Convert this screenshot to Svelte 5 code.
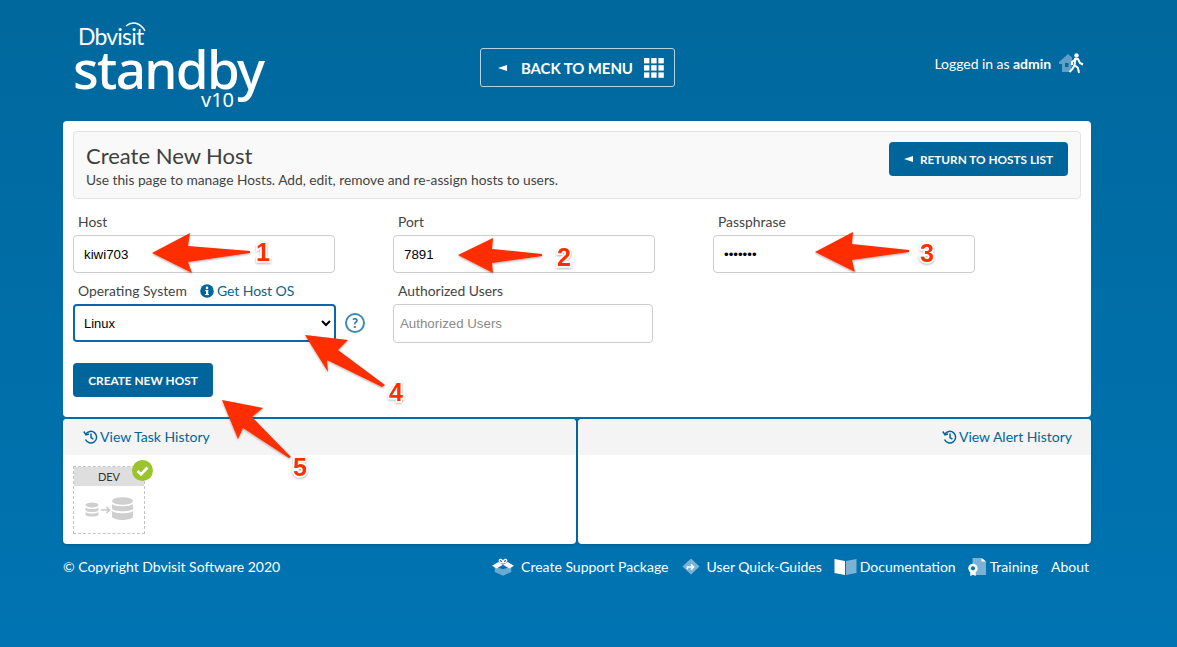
<script>
	const fields = [
		{ label: 'Host', value: 'kiwi703', type: 'text' },
		{ label: 'Port', value: '7891', type: 'text' },
		{ label: 'Passphrase', value: 'secret1', type: 'password' }
	];

	// red callouts drawn over the form
	const arrows = [
		{ n: 1, tx: 263, ty: 261, points: '152,253 190,233 188,246 250,251 250,253 188,262 192,273' },
		{ n: 2, tx: 564, ty: 266, points: '458,255 493,238 492,249 542,254 542,256 492,263 493,273' },
		{ n: 3, tx: 927, ty: 262, points: '815,252 853,232 852,244 909,250 909,252 852,260 855,272' },
		{ n: 4, tx: 396, ty: 401, points: '305,335 348,340 338,350 385,385 382,387 327,360 328,372' },
		{ n: 5, tx: 300, ty: 476, points: '222,400 263,408 252,417 291,457 289,458 243,428 238,439' }
	];
</script>

<div class="page">
	<header class="top">
		<div class="logo">
			<div class="logo-brand">Dbvisit</div>
			<div class="logo-name">standby</div>
			<div class="logo-version">v10</div>
			<svg class="logo-arc" width="24" height="14" viewBox="0 0 24 14">
				<path d="M2 5C8 0 16 1 21 10" fill="none" stroke="#fff" stroke-width="1.500" />
			</svg>
		</div>
		<button class="menu-btn">
			<span class="tri"></span>
			<span>BACK TO MENU</span>
			<svg width="20" height="20" viewBox="0 0 20 20" fill="#fff">
				{#each [0, 7.2, 14.4] as y}
					{#each [0, 7.2, 14.4] as x}
						<rect {x} {y} width="5.4" height="5.4" />
					{/each}
				{/each}
			</svg>
		</button>
		<div class="login">
			<span>Logged in as <b>admin</b></span>
			<svg width="26" height="22" viewBox="0 0 26 22">
				<path d="M1 10 10 2l4 3.4V12l-1 8H4v-8H1z" fill="#5f9fc6" />
				<rect x="7" y="11" width="3.5" height="4" fill="#006a9f" />
				<circle cx="18.5" cy="3.5" r="2.2" fill="#fff" />
				<path d="M16 7h4l2 4 3 1.5M17.5 7l-1 6 3.5 3 1 5M16.500 13l-2 4-3 3M16.500 8l-2.500 2v3" fill="none" stroke="#fff" stroke-width="2" />
			</svg>
		</div>
	</header>

	<main class="card">
		<div class="title-box">
			<div>
				<h1>Create New Host</h1>
				<p>Use this page to manage Hosts. Add, edit, remove and re-assign hosts to users.</p>
			</div>
			<button class="btn return"><span class="tri small"></span>RETURN TO HOSTS LIST</button>
		</div>

		<div class="form-grid">
			{#each fields as f}
				<div class="field">
					<label for={f.label}>{f.label}</label>
					<input id={f.label} type={f.type} value={f.value} />
				</div>
			{/each}

			<div class="field">
				<div class="os-label">
					<label for="os">Operating System</label>
					<span class="link get-os">
						<svg width="14" height="14" viewBox="0 0 14 14">
							<circle cx="7" cy="7" r="6.800" fill="#00659b" />
							<rect x="6" y="6" width="2.200" height="5" fill="#fff" />
							<rect x="5.200" y="6" width="3" height="1.100" fill="#fff" />
							<rect x="5.200" y="10" width="3.800" height="1.100" fill="#fff" />
							<circle cx="7" cy="3.900" r="1.300" fill="#fff" />
						</svg>
						Get Host OS
					</span>
				</div>
				<div class="os-row">
					<select id="os" class="os-select">
						<option>Linux</option>
					</select>
					<span class="help">?</span>
				</div>
			</div>
			<div class="field">
				<label for="users">Authorized Users</label>
				<input id="users" class="users" placeholder="Authorized Users" />
			</div>
		</div>

		<button class="btn create">CREATE NEW HOST</button>
	</main>

	<section class="panels">
		<div class="panel">
			<div class="panel-head">
				<span class="link">
					<svg class="hist" width="15" height="14" viewBox="0 0 15 14" fill="none" stroke="#00659b" stroke-width="1.500">
						<path d="M2.800 4.200A5.800 5.800 0 1 1 2.500 9.500" />
						<path d="M.8 1.500 3 4.800l3-.8" />
						<path d="M8 3.600V7.500l2.400 1.600" />
					</svg>
					View Task History
				</span>
			</div>
			<div class="tile">
				<div class="tile-head">DEV</div>
				<div class="tile-body">
					<svg width="50" height="26" viewBox="0 0 50 26">
						<g fill="#cfcfcf">
							<ellipse cx="7" cy="8" rx="6.500" ry="2.600" />
							<path d="M.5 10.500c2 2 11 2 13 0v3c-2 2-11 2-13 0z" />
							<path d="M.5 15c2 2 11 2 13 0v3c-2 2-11 2-13 0z" />
							<ellipse cx="37.500" cy="4" rx="10.500" ry="3.800" />
							<path d="M27 7c3 3 18 3 21 0v5c-3 3-18 3-21 0z" />
							<path d="M27 14c3 3 18 3 21 0v6c-3 4-18 4-21 0z" />
						</g>
						<path d="M16 13h8M21.500 10l3 3-3 3" fill="none" stroke="#c8c8c8" stroke-width="1.500" />
					</svg>
				</div>
				<div class="ok">
					<svg width="21" height="21" viewBox="0 0 21 21">
						<path d="M5.500 11l3.500 3.500 6.500-7" fill="none" stroke="#fff" stroke-width="2.600" />
					</svg>
				</div>
			</div>
		</div>
		<div class="panel">
			<div class="panel-head right">
				<span class="link">
					<svg class="hist" width="15" height="14" viewBox="0 0 15 14" fill="none" stroke="#00659b" stroke-width="1.500">
						<path d="M2.800 4.200A5.800 5.800 0 1 1 2.500 9.500" />
						<path d="M.8 1.500 3 4.800l3-.8" />
						<path d="M8 3.600V7.500l2.400 1.600" />
					</svg>
					View Alert History
				</span>
			</div>
		</div>
	</section>

	<footer class="foot">
		<span>© Copyright Dbvisit Software 2020</span>
		<nav class="foot-links">
			<span class="foot-item support">
				<svg width="22" height="18" viewBox="0 0 24 19">
					<path d="M3 9l9 3 9-3v6l-9 4-9-4z" fill="#6aaad2" />
					<path d="M0 8l7-4 5 3-7 4zM24 8l-7-4-5 3 7 4z" fill="#fff" />
					<path d="M8 2.500C8 .5 11 .5 12 4c1-3.500 4-3.500 4-1.500S13 5 12 5 8 4.500 8 2.500z" fill="none" stroke="#fff" stroke-width="1.500" />
				</svg>
				Create Support Package
			</span>
			<span class="foot-item quick">
				<svg width="18" height="17" viewBox="0 0 20 18">
					<path d="M10 0l9.500 9L10 18 .5 9z" fill="#7ab2d6" />
					<path d="M6 12V9.500h6M10 6.500l3 3-3 3" fill="none" stroke="#fff" stroke-width="1.700" />
				</svg>
				User Quick-Guides
			</span>
			<span class="foot-item docs">
				<svg width="23" height="17" viewBox="0 0 22 17">
					<path d="M0 1l10.500 2v14L0 15z" fill="#fff" />
					<path d="M11.500 3L22 1v14l-10.500 2z" fill="#7ab2d6" />
				</svg>
				Documentation
			</span>
			<span class="foot-item training">
				<svg width="18" height="20" viewBox="0 0 20 20">
					<path d="M5 0h10l5 4v15H5z" fill="#7ab2d6" />
					<path d="M15 0l5 4h-5z" fill="#fff" />
					<circle cx="5.500" cy="11.500" r="5.200" fill="#fff" />
					<circle cx="5.500" cy="11.500" r="2.300" fill="#0a72ad" />
					<path d="M2.500 15v5l3-1.500 3 1.500v-5z" fill="#fff" />
				</svg>
				Training
			</span>
			<span class="about">About</span>
		</nav>
	</footer>

	<svg class="overlay" width="1177" height="647" viewBox="0 0 1177 647">
		<defs>
			<filter id="soft" x="-20%" y="-20%" width="140%" height="140%">
				<feDropShadow dx="0" dy="1" stdDeviation="1.200" flood-color="#000" flood-opacity="0.35" />
			</filter>
		</defs>
		{#each arrows as a}
			<polygon points={a.points} fill="#fe2f00" filter="url(#soft)" />
			<text x={a.tx} y={a.ty} class="num" filter="url(#soft)">{a.n}</text>
		{/each}
	</svg>
</div>

<style>
	:global(body) {
		margin: 0;
		background: #0070ab;
	}

	.page {
		position: relative;
		width: 1177px;
		height: 647px;
		overflow: hidden;
		box-sizing: border-box;
		padding: 0 86px 0 63px;
		background: linear-gradient(#00689d, #0074b2);
		font-family: Lato, sans-serif;
		color: #fff;
	}

	.top {
		height: 121px;
		display: flex;
		align-items: flex-start;
		position: relative;
	}

	.logo {
		position: relative;
		width: 417px;
		padding: 25px 0 0 10px;
		box-sizing: border-box;
		flex: none;
		line-height: 1;
		display: flex;
		flex-direction: column;
	}

	.logo-brand {
		font-size: 23px;
		height: 23px;
		letter-spacing: -0.8px;
		margin-left: 5px;
		font-family: Lato, sans-serif;
	}

	.logo-name {
		font-size: 53px;
		height: 42px;
		line-height: 42px;
		letter-spacing: -1.700px;
		font-family: 'Noto Sans', sans-serif;
		font-weight: 500;
	}

	.logo-version {
		font-size: 20px;
		font-family: 'Noto Sans', sans-serif;
		margin: 0 0 0 128px;
	}

	.logo-arc {
		position: absolute;
		left: 61px;
		top: 21px;
	}

	.tri {
		width: 0;
		height: 0;
		border-style: solid;
		border-width: 3.500px 9px 3.500px 0;
		border-color: transparent #fff transparent transparent;
		flex: none;
	}

	.tri.small {
		margin-right: 7px;
	}

	.menu-btn {
		margin-top: 48px;
		width: 195px;
		height: 39px;
		box-sizing: border-box;
		display: flex;
		align-items: center;
		gap: 14px;
		padding: 0 11px 0 17px;
		background: transparent;
		border: 1px solid #b6d2e3;
		border-radius: 3px;
		color: #fff;
		font: 700 15px Lato, sans-serif;
		letter-spacing: -0.1px;
		white-space: nowrap;
	}

	.menu-btn svg {
		flex: none;
		margin-left: -3px;
	}

	.login {
		margin: 52px 0 0 auto;
		display: flex;
		align-items: center;
		gap: 7px;
		font-size: 14px;
		letter-spacing: -0.05px;
		position: relative;
		left: -7px;
	}

	.card {
		background: #fff;
		color: #444;
		height: 296px;
		box-sizing: border-box;
		padding: 10px 10px 0;
		border-radius: 4px;
	}

	.title-box {
		height: 68px;
		box-sizing: border-box;
		border: 1px solid #e3e3e3;
		border-radius: 4px;
		background: #f9f9f9;
		padding: 11px 12px 0;
		display: flex;
		justify-content: space-between;
		align-items: flex-start;
	}

	h1 {
		margin: 0;
		font-size: 22px;
		line-height: 26px;
		font-weight: 400;
		color: #3f3f3f;
	}

	.title-box p {
		margin: 2px 0 0;
		font-size: 13.750px;
		line-height: 17px;
		color: #444;
	}

	.btn {
		background: #00659b;
		color: #fff;
		border: 0;
		border-radius: 4px;
		font: 700 11.800px Lato, sans-serif;
		display: flex;
		align-items: center;
		justify-content: center;
		white-space: nowrap;
	}

	.return {
		width: 179px;
		height: 34px;
		margin-top: -1px;
	}

	.form-grid {
		display: grid;
		grid-template-columns: repeat(3, 320px);
		margin-top: 14px;
		row-gap: 9px;
	}

	.field label {
		display: block;
		font-size: 13.900px;
		line-height: 18px;
		padding-left: 5px;
		margin-bottom: 4px;
		color: #444;
	}

	.field input {
		display: block;
		width: 262px;
		height: 38px;
		box-sizing: border-box;
		padding: 0 10px;
		border: 1px solid #ccc;
		border-radius: 4px;
		font: 13.300px 'Liberation Sans', sans-serif;
		color: #000;
		background: #fff;
	}

	.field input.users {
		width: 260px;
		height: 39px;
		padding: 0 6px;
	}

	input::placeholder {
		color: #8a8a8a;
		opacity: 1;
	}

	.os-label {
		display: flex;
		gap: 13px;
	}

	.link {
		color: #00659b;
		font-size: 14px;
	}

	.get-os {
		display: inline-flex;
		align-items: center;
		gap: 3px;
		line-height: 18px;
		height: 18px;
		letter-spacing: -0.05px;
	}

	.os-row {
		display: flex;
		align-items: center;
		gap: 9px;
	}

	.os-select {
		width: 263px;
		height: 38px;
		box-sizing: border-box;
		padding: 0 5px;
		border: 2px solid #0a66b0;
		border-radius: 4px;
		background: #fff;
		font: 13px 'Liberation Sans', sans-serif;
		color: #000;
	}

	.help {
		width: 16px;
		height: 16px;
		border: 2px solid #3b8bb5;
		border-radius: 50%;
		color: #2880ad;
		font: 900 13px/16px Lato, sans-serif;
		text-align: center;
	}

	.create {
		width: 140px;
		height: 34px;
		margin-top: 20px;
	}

	.panels {
		display: grid;
		grid-template-columns: 513px 513px;
		column-gap: 2px;
		margin-top: 2px;
		height: 125px;
	}

	.panel {
		background: #fff;
		border-radius: 4px;
		box-shadow: 0 1px 3px rgba(0, 0, 0, 0.2);
		color: #444;
	}

	.panel-head {
		height: 36px;
		box-sizing: border-box;
		background: #f4f4f4;
		display: flex;
		align-items: center;
		padding: 0 19px 2px 20px;
		border-radius: 4px 4px 0 0;
	}

	.panel-head.right {
		justify-content: flex-end;
	}

	.hist {
		vertical-align: -2px;
		margin-right: -1px;
	}

	.tile {
		position: relative;
		width: 72px;
		height: 68px;
		box-sizing: border-box;
		margin: 11px 0 0 10px;
		border: 1px dashed #c4c4c4;
	}

	.tile-head {
		height: 19px;
		background: #dedede;
		font-size: 11px;
		line-height: 20px;
		text-align: center;
		color: #333;
	}

	.tile-body {
		padding: 11px 0 0 11px;
	}

	.tile-body svg {
		display: block;
	}

	.ok {
		position: absolute;
		top: -7px;
		right: -9px;
		width: 21px;
		height: 21px;
		border-radius: 50%;
		background: #9bc42c;
	}

	.foot {
		display: flex;
		justify-content: space-between;
		align-items: center;
		height: 45px;
		font-size: 14px;
		color: #fff;
	}

	.foot-links {
		display: flex;
		align-items: center;
		gap: 12px;
		margin-right: 2px;
	}

	.foot-item {
		display: flex;
		align-items: center;
	}

	.support {
		gap: 7px;
		margin-right: 2px;
	}

	.quick {
		gap: 6px;
	}

	.docs {
		gap: 3px;
	}

	.training {
		gap: 4px;
		margin-right: 1px;
	}

	.overlay {
		position: absolute;
		left: 0;
		top: 0;
		pointer-events: none;
	}

	.num {
		font: 700 25px 'Liberation Sans', sans-serif;
		fill: #fe2f00;
		stroke: #fff;
		stroke-width: 3px;
		paint-order: stroke;
		text-anchor: middle;
	}
</style>
